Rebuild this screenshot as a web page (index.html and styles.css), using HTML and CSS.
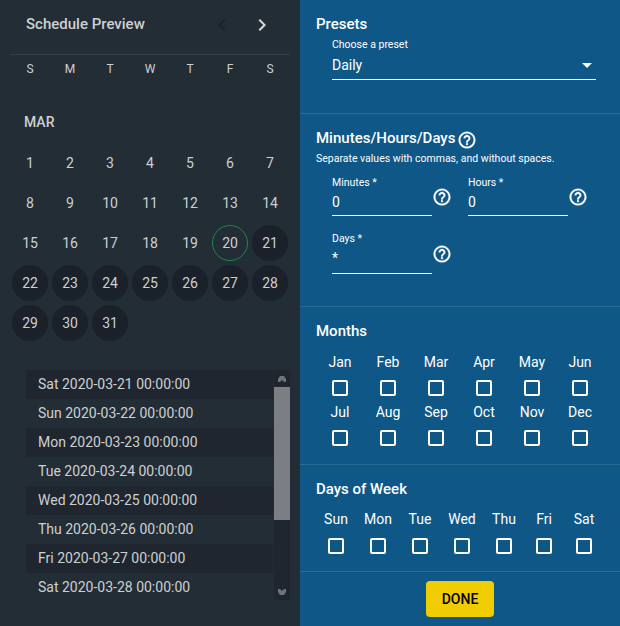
FILE: index.html
```html
<!DOCTYPE html>
<html lang="en">
<head>
    <meta charset="UTF-8">
    <meta name="viewport" content="width=device-width, initial-scale=1.0">
    <title>Schedule Editor</title>
    <link rel="stylesheet" href="styles.css">
</head>
<body>
    <svg class="icon-defs" width="0" height="0">
        <symbol id="help" viewBox="0 0 24 24">
            <path d="M11 18h2v-2h-2v2zm1-16C6.48 2 2 6.48 2 12s4.48 10 10 10 10-4.48 10-10S17.52 2 12 2zm0 18c-4.41 0-8-3.59-8-8s3.59-8 8-8 8 3.59 8 8-3.59 8-8 8zm0-14c-2.21 0-4 1.79-4 4h2c0-1.1.9-2 2-2s2 .9 2 2c0 2-3 1.75-3 5h2c0-2.25 3-2.5 3-5 0-2.21-1.79-4-4-4z"/>
        </symbol>
    </svg>
    <div class="app">
        <aside class="preview">
            <div class="preview-head">
                <h2>Schedule Preview</h2>
                <div class="nav">
                    <svg class="chevron chevron-off" viewBox="0 0 24 24"><path d="M15.41 7.41 14 6l-6 6 6 6 1.41-1.41L10.83 12z"/></svg>
                    <svg class="chevron" viewBox="0 0 24 24"><path d="M10 6 8.59 7.41 13.17 12l-4.58 4.59L10 18l6-6z"/></svg>
                </div>
            </div>
            <div class="weekdays">
                <span>S</span><span>M</span><span>T</span><span>W</span><span>T</span><span>F</span><span>S</span>
            </div>
            <div class="month-name">MAR</div>
            <div class="calendar">
                <span>1</span><span>2</span><span>3</span><span>4</span><span>5</span><span>6</span><span>7</span>
                <span>8</span><span>9</span><span>10</span><span>11</span><span>12</span><span>13</span><span>14</span>
                <span>15</span><span>16</span><span>17</span><span>18</span><span>19</span>
                <span class="today">20</span>
                <span class="hit">21</span>
                <span class="hit">22</span><span class="hit">23</span><span class="hit">24</span><span class="hit">25</span><span class="hit">26</span><span class="hit">27</span><span class="hit">28</span>
                <span class="hit">29</span><span class="hit">30</span><span class="hit">31</span>
            </div>
            <div class="runs">
                <ul class="run-list">
                    <li>Sat 2020-03-21 00:00:00</li>
                    <li>Sun 2020-03-22 00:00:00</li>
                    <li>Mon 2020-03-23 00:00:00</li>
                    <li>Tue 2020-03-24 00:00:00</li>
                    <li>Wed 2020-03-25 00:00:00</li>
                    <li>Thu 2020-03-26 00:00:00</li>
                    <li>Fri 2020-03-27 00:00:00</li>
                    <li>Sat 2020-03-28 00:00:00</li>
                </ul>
                <div class="scrollbar">
                    <svg class="scroll-arrow" viewBox="0 0 16 17"><path d="M6 6h4l2 3v3h-2L8 10l-2 2H4V9z"/></svg>
                    <div class="scroll-thumb"></div>
                    <div class="scroll-gap"></div>
                    <svg class="scroll-arrow" viewBox="0 0 16 17"><path d="M4 6h2l2 2 2-2h2v3l-2 3H6L4 9z"/></svg>
                </div>
            </div>
        </aside>

        <main class="editor">
            <section class="block block-presets">
                <h3>Presets</h3>
                <div class="field field-select">
                    <label>Choose a preset</label>
                    <div class="value">Daily<span class="caret"></span></div>
                </div>
            </section>

            <section class="block block-times">
                <h3 class="title-help">Minutes/Hours/Days<svg class="help"><use href="#help"/></svg></h3>
                <p class="hint">Separate values with commas, and without spaces.</p>
                <div class="time-row">
                    <div class="time-item">
                        <div class="field field-time">
                            <label>Minutes *</label>
                            <div class="value">0</div>
                        </div>
                        <svg class="help"><use href="#help"/></svg>
                    </div>
                    <div class="time-item">
                        <div class="field field-time">
                            <label>Hours *</label>
                            <div class="value">0</div>
                        </div>
                        <svg class="help"><use href="#help"/></svg>
                    </div>
                </div>
                <div class="time-row time-row-days">
                    <div class="time-item">
                        <div class="field field-time">
                            <label>Days *</label>
                            <div class="value">*</div>
                        </div>
                        <svg class="help"><use href="#help"/></svg>
                    </div>
                </div>
            </section>

            <section class="block block-months">
                <h3>Months</h3>
                <div class="checks months">
                    <label>Jan<input type="checkbox"></label>
                    <label>Feb<input type="checkbox"></label>
                    <label>Mar<input type="checkbox"></label>
                    <label>Apr<input type="checkbox"></label>
                    <label>May<input type="checkbox"></label>
                    <label>Jun<input type="checkbox"></label>
                    <label>Jul<input type="checkbox"></label>
                    <label>Aug<input type="checkbox"></label>
                    <label>Sep<input type="checkbox"></label>
                    <label>Oct<input type="checkbox"></label>
                    <label>Nov<input type="checkbox"></label>
                    <label>Dec<input type="checkbox"></label>
                </div>
            </section>

            <section class="block block-days">
                <h3>Days of Week</h3>
                <div class="checks dow">
                    <label>Sun<input type="checkbox"></label>
                    <label>Mon<input type="checkbox"></label>
                    <label>Tue<input type="checkbox"></label>
                    <label>Wed<input type="checkbox"></label>
                    <label>Thu<input type="checkbox"></label>
                    <label>Fri<input type="checkbox"></label>
                    <label>Sat<input type="checkbox"></label>
                </div>
            </section>

            <div class="actions">
                <button type="button">DONE</button>
            </div>
        </main>
    </div>
</body>
</html>
```

FILE: styles.css
```css
/* General Styling */
html, body {
    margin: 0;
    height: 626px;
    overflow: hidden;
}

body {
    font-family: Roboto, 'Liberation Sans', sans-serif;
    background: #232d36;
}

.icon-defs {
    display: block;
    height: 0;
}

.app {
    display: flex;
    width: 620px;
    height: 626px;
}

/* Left panel */
.preview {
    width: 300px;
    box-sizing: border-box;
    background: #232d36;
    color: #cdd0d2;
    padding: 0 10px;
}

.preview-head {
    display: flex;
    justify-content: space-between;
    height: 54px;
    border-bottom: 1px solid #37404a;
    padding: 0 16px;
}

.preview-head h2 {
    margin: 0;
    font-size: 15px;
    font-weight: 500;
    line-height: 48px;
}

.nav {
    display: flex;
    gap: 16px;
    padding-top: 1px;
}

.chevron {
    width: 24px;
    height: 48px;
    fill: #d8dadc;
}

.chevron-off {
    fill: #1b222b;
}

.weekdays,
.calendar {
    display: grid;
    grid-template-columns: repeat(7, 40px);
}

.weekdays {
    height: 28px;
    line-height: 28px;
    font-size: 12px;
    text-align: center;
}

.month-name {
    margin: 21px 0 0 14px;
    font-size: 14px;
    font-weight: 500;
    line-height: 36px;
}

.calendar {
    margin-top: 3px;
    font-size: 14px;
    grid-auto-rows: 40px;
}

.calendar span {
    width: 36px;
    height: 36px;
    margin: 2px;
    box-sizing: border-box;
    border-radius: 50%;
    display: flex;
    align-items: center;
    justify-content: center;
}

.calendar .hit {
    background: #1a212b;
}

.calendar .today {
    border: 1px solid #1f8a45;
}

.runs {
    display: flex;
    margin: 27px 0 0 16px;
    height: 230px;
    width: 264px;
}

.run-list {
    list-style: none;
    margin: 0;
    padding: 0;
    width: 247px;
    flex: none;
    font-size: 14px;
}

.run-list li {
    height: 29px;
    line-height: 29px;
    padding-left: 12px;
}

.run-list li:nth-child(odd) {
    background: #1f262f;
}

.scrollbar {
    width: 16px;
    margin-left: 1px;
    background: #1f262f;
    display: flex;
    flex-direction: column;
}

.scroll-arrow {
    width: 16px;
    height: 17px;
    flex: none;
    fill: #6f7378;
}

.scroll-thumb {
    height: 133px;
    background: #7b7e83;
}

.scroll-gap {
    flex: 1;
}

/* Right panel */
.editor {
    width: 320px;
    background: #0e5787;
    color: #fff;
    display: flex;
    flex-direction: column;
}

.block {
    box-sizing: border-box;
    border-bottom: 1px solid #2a6a95;
    padding: 0 16px;
}

.block h3 {
    margin: 0;
    font-size: 15px;
    font-weight: 500;
    line-height: 20px;
}

.block-presets {
    height: 114px;
    padding-top: 14px;
}

.block-times {
    height: 193px;
    padding-top: 14px;
}

.block-months {
    height: 158px;
    padding-top: 14px;
}

.block-days {
    height: 107px;
    padding-top: 14px;
}

.field label {
    display: block;
    font-size: 10.5px;
    line-height: 14px;
}

.field .value {
    position: relative;
    box-sizing: border-box;
    font-size: 14px;
    border-bottom: 1px solid #fff;
}

.field-select {
    margin: 4px 8px 0 16px;
}

.field-select .value {
    height: 28px;
    line-height: 26px;
}

.caret {
    position: absolute;
    right: 4px;
    top: 11px;
    border-left: 5px solid transparent;
    border-right: 5px solid transparent;
    border-top: 5px solid #fff;
}

.title-help {
    display: flex;
    align-items: center;
    height: 20px;
}

.title-help .help {
    margin: 4px 0 0 2px;
}

.help {
    width: 20px;
    height: 20px;
    flex: none;
    fill: #fff;
    stroke: #fff;
    stroke-width: 0.4;
}

.hint {
    margin: 4px 0 0;
    font-size: 10.5px;
    line-height: 14px;
}

.time-row {
    display: flex;
    gap: 16px;
    margin: 9px 0 0 16px;
}

.time-item {
    display: flex;
    width: 120px;
}

.time-item .help {
    margin-top: 12px;
}

.field-time {
    width: 100px;
}

.field-time label {
    margin-top: 1px;
}

.field-time .value {
    height: 26px;
    line-height: 25px;
}

.time-row-days {
    margin-top: 16px;
}

.time-row-days label {
    margin-top: 0;
}

.time-row-days .value {
    height: 28px;
}

.checks {
    display: grid;
    text-align: center;
    font-size: 14px;
}

.checks label {
    display: flex;
    flex-direction: column;
    align-items: center;
    line-height: 16px;
}

.checks input {
    appearance: none;
    box-sizing: border-box;
    width: 16px;
    height: 16px;
    margin: 10px 0 0;
    border: 2px solid #fff;
    border-radius: 2px;
    background: transparent;
}

.months {
    grid-template-columns: repeat(6, 48px);
    row-gap: 8px;
    margin-top: 13px;
}

.dow {
    grid-template-columns: repeat(5, 42px) 38px 42px;
    margin: 12px 0 0 -1px;
}

.dow input {
    margin-top: 11px;
}

.actions {
    display: flex;
    justify-content: center;
    padding-top: 9px;
}

button {
    width: 68px;
    height: 36px;
    border: none;
    border-radius: 4px;
    background: #f0cd00;
    color: #000;
    font-family: inherit;
    font-size: 14px;
    font-weight: 500;
}
```
